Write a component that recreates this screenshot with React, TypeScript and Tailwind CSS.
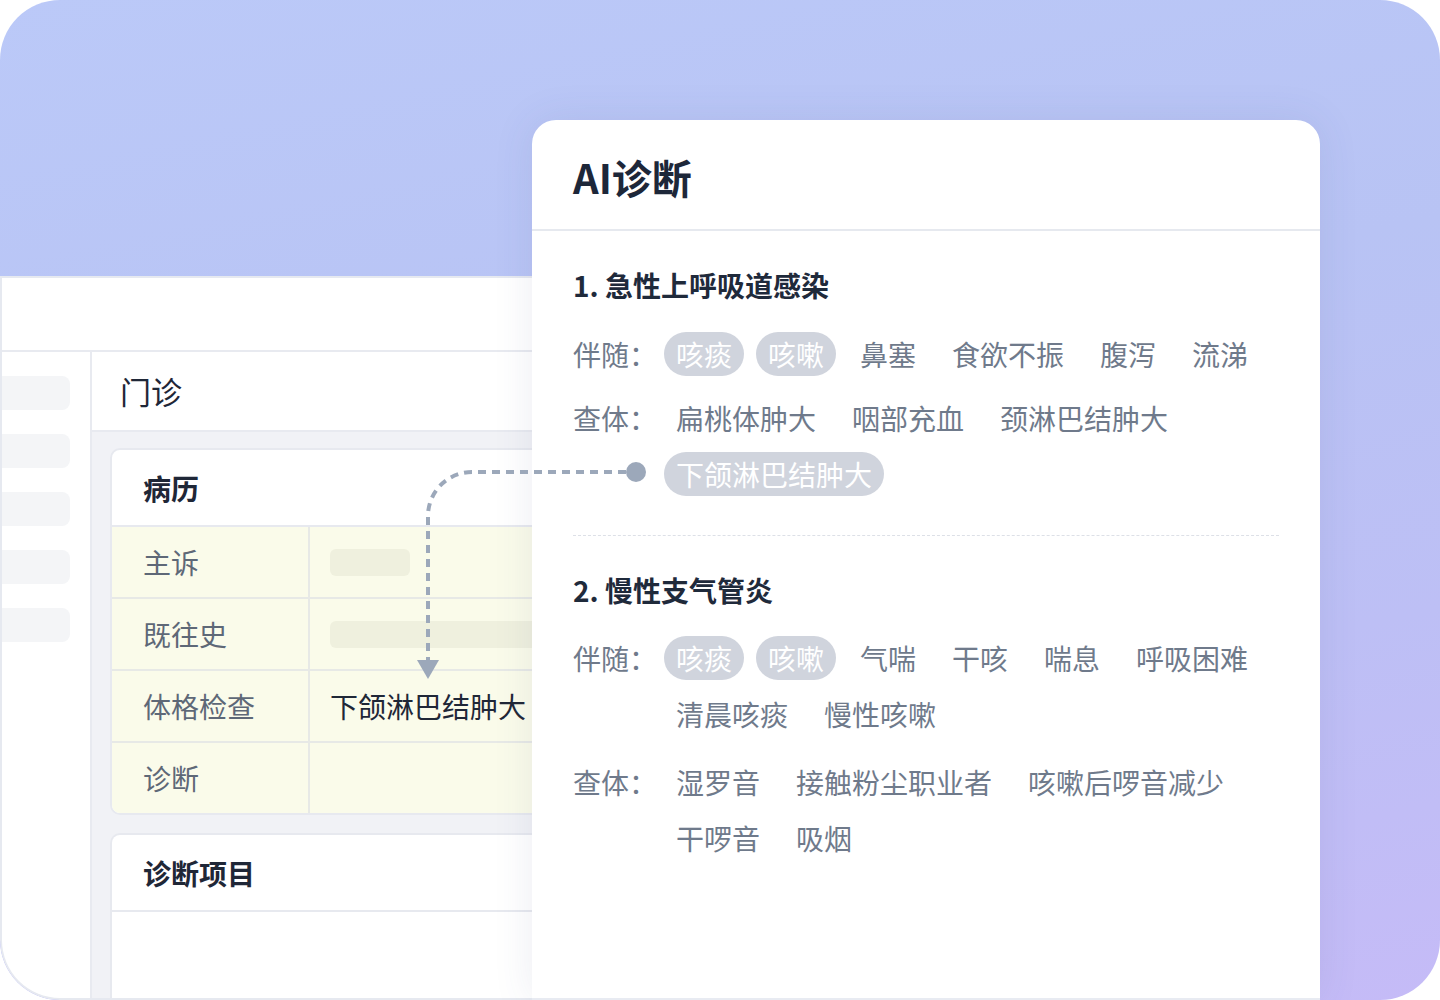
import React from "react";

const FONT = "font-['Noto_Sans_CJK_SC','Noto_Sans',sans-serif]";

function Tag({ t, hi }: { t: string; hi?: boolean }) {
  return (
    <span
      className={
        hi
          ? "h-[44px] px-3 rounded-full bg-[#d0d4dd] text-white text-[28px] leading-[44px] whitespace-nowrap"
          : "h-[44px] px-3 text-[#6f7a8b] text-[28px] leading-[44px] whitespace-nowrap"
      }
    >
      {t}
    </span>
  );
}

function Row({ label, items, his = [] }: { label: string; items: string[]; his?: string[] }) {
  return (
    <div className="flex">
      <div className="w-[91px] shrink-0 text-[28px] leading-[44px] text-[#6f7a8b] whitespace-nowrap">{label}</div>
      <div className="flex flex-wrap gap-3 flex-1">
        {items.map((t, i) => (
          <Tag key={i} t={t} hi={his.includes(t)} />
        ))}
      </div>
    </div>
  );
}

function TableRow({ label, children, last }: { label: string; children?: React.ReactNode; last?: boolean }) {
  return (
    <div className={last ? "flex h-[70px] bg-[#fafbea]" : "flex h-[72px] bg-[#fafbea] border-b-2 border-[#e7e9e6]"}>
      <div className="w-[198px] shrink-0 border-r-2 border-[#e7e9e6] pl-[31px] flex items-center text-[28px] text-[#5e6877]">
        {label}
      </div>
      <div className="flex-1 pl-5 flex items-center">{children}</div>
    </div>
  );
}

export default function App() {
  return (
    <div className={"w-[1440px] h-[1000px] bg-white " + FONT}>
      <div className="relative w-full h-full rounded-[60px] overflow-hidden bg-[linear-gradient(168deg,#bbc9f8_0%,#b8c3f4_40%,#bdbff5_70%,#c5bbf7_100%)]">
        {/* Left window */}
        <div className="absolute left-0 top-[276px] w-[1250px] bottom-0 bg-white border-t-2 border-l-2 border-b-2 border-[#e6e9f0] rounded-bl-[60px] overflow-hidden flex flex-col">
          <div className="h-[74px] shrink-0 border-b-2 border-[#e8eaf0]" />
          <div className="flex flex-1">
            <div className="w-[90px] shrink-0 border-r-2 border-[#e8eaf0] pt-6 flex flex-col gap-6 overflow-hidden">
              {[0, 1, 2, 3, 4].map((i) => (
                <div key={i} className="-ml-[20px] w-[88px] h-[34px] rounded-lg bg-[#f4f5f7]" />
              ))}
            </div>
            <div className="flex-1 flex flex-col">
              <div className="h-[80px] shrink-0 border-b-2 border-[#e8eaf0] pl-7 flex items-center text-[31px] text-[#1f2737]">
                门诊
              </div>
              <div className="flex-1 bg-[#f1f2f6] pt-4 pl-[18px] flex flex-col gap-[18px]">
                <div className="bg-white border-2 border-[#e7e9ef] rounded-[10px] overflow-hidden">
                  <div className="h-[77px] border-b-2 border-[#e7e9ef] pl-[31px] flex items-center text-[28px] font-bold text-[#1f2737]">
                    病历
                  </div>
                  <TableRow label="主诉">
                    <div className="w-[80px] h-[27px] rounded-md bg-[#eff0de]" />
                  </TableRow>
                  <TableRow label="既往史">
                    <div className="w-[400px] h-[27px] rounded-md bg-[#eff0de]" />
                  </TableRow>
                  <TableRow label="体格检查">
                    <span className="text-[28px] text-[#1f2737] whitespace-nowrap">下颌淋巴结肿大</span>
                  </TableRow>
                  <TableRow label="诊断" last />
                </div>
                <div className="flex-1 bg-white border-2 border-b-0 border-[#e7e9ef] rounded-t-[10px] overflow-hidden">
                  <div className="h-[77px] border-b-2 border-[#e7e9ef] pl-[31px] flex items-center text-[28px] font-bold text-[#1f2737]">
                    诊断项目
                  </div>
                </div>
              </div>
            </div>
          </div>
        </div>

        {/* AI panel */}
        <div className="absolute left-[532px] top-[120px] w-[788px] bottom-0 bg-white border-b-2 border-[#e8ebf2] rounded-t-[24px] shadow-[0_0_40px_rgba(70,80,130,0.10)] flex flex-col">
          <div className="h-[111px] shrink-0 border-b-2 border-[#e6e9ef] px-[41px] pt-1 flex items-center text-[40px] font-bold text-[#1d2739]">
            AI诊断
          </div>
          <div className="px-[41px] pt-[34px] flex flex-col">
            <div className="text-[28px] leading-[40px] font-bold text-[#1f2a3b] whitespace-nowrap">1. 急性上呼吸道感染</div>
            <div className="mt-[27px] flex flex-col gap-5">
              <Row label="伴随：" items={["咳痰", "咳嗽", "鼻塞", "食欲不振", "腹泻", "流涕"]} his={["咳痰", "咳嗽"]} />
              <Row label="查体：" items={["扁桃体肿大", "咽部充血", "颈淋巴结肿大", "下颌淋巴结肿大"]} his={["下颌淋巴结肿大"]} />
            </div>
            <div className="mt-[39px] border-t border-dashed border-[#dde0e7]" />
            <div className="mt-[34px] text-[28px] leading-[40px] font-bold text-[#1f2a3b] whitespace-nowrap">2. 慢性支气管炎</div>
            <div className="mt-[26px] flex flex-col gap-6">
              <Row
                label="伴随："
                items={["咳痰", "咳嗽", "气喘", "干咳", "喘息", "呼吸困难", "清晨咳痰", "慢性咳嗽"]}
                his={["咳痰", "咳嗽"]}
              />
              <Row label="查体：" items={["湿罗音", "接触粉尘职业者", "咳嗽后啰音减少", "干啰音", "吸烟"]} />
            </div>
          </div>
        </div>

        {/* Connector */}
        <svg className="absolute inset-0 w-full h-full pointer-events-none" viewBox="0 0 1440 1000">
          <path
            d="M 626 472 H 472 A 44 44 0 0 0 428 516 V 662"
            fill="none"
            stroke="#9ca8ba"
            strokeWidth="4"
            strokeDasharray="8 6"
          />
          <polygon points="417,660 439,660 428,679" fill="#9ca8ba" />
          <circle cx="636" cy="472" r="10" fill="#9ca8ba" />
        </svg>
      </div>
    </div>
  );
}
